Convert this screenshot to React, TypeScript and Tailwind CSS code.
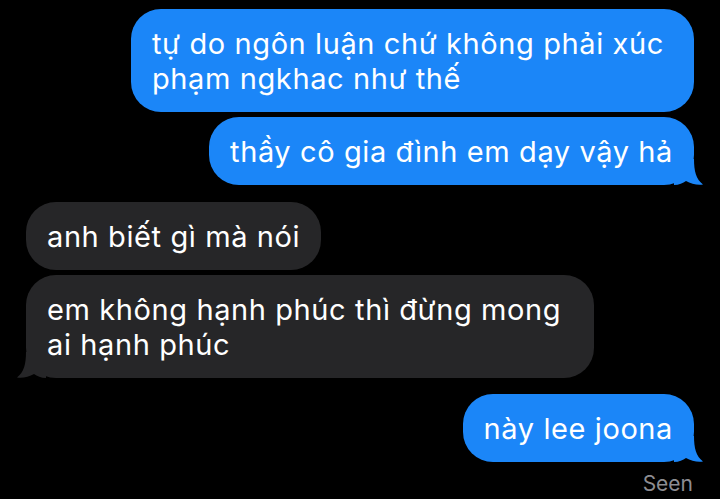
import React from "react";

const BLUE = "#1b86f8";
const GRAY = "#262628";

function Tail({ side, color }: { side: "left" | "right"; color: string }) {
  return (
    <svg
      width="30"
      height="26"
      viewBox="0 0 30 26"
      className={
        side === "right"
          ? "absolute right-[-10px] bottom-0"
          : "absolute left-[-10px] bottom-0 -scale-x-100"
      }
    >
      <path
        d="M20 0 C20 12 22 20 29 25.5 C24 26.5 17 25 12 22 C9 24 5 26 0 26 L0 0 Z"
        fill={color}
      />
    </svg>
  );
}

function Bubble({
  text,
  side,
  tail,
  narrow,
}: {
  text: React.ReactNode;
  side: "left" | "right";
  tail?: boolean;
  narrow?: boolean;
}) {
  const color = side === "right" ? BLUE : GRAY;
  return (
    <div className={side === "right" ? "flex justify-end" : "flex justify-start"}>
      <div
        className={
          "relative rounded-[30px] px-[21px] pt-[17px] pb-[16px] text-[29px] leading-[35px] tracking-[0.6px] text-white " +
          (narrow ? "max-w-[563px]" : "max-w-[568px]")
        }
        style={{ backgroundColor: color }}
      >
        {tail && <Tail side={side} color={color} />}
        <span className="relative">{text}</span>
      </div>
    </div>
  );
}

export default function App() {
  return (
    <div
      className="w-[720px] h-[499px] bg-black overflow-hidden px-[26px] pt-[9px]"
      style={{ fontFamily: "Inter, 'Noto Sans', sans-serif" }}
    >
      <div className="flex flex-col">
        <Bubble side="right" narrow text="tự do ngôn luận chứ không phải xúc phạm ngkhac như thế" />
        <div className="h-[5px]" />
        <Bubble side="right" tail text="thầy cô gia đình em dạy vậy hả" />
        <div className="h-[17px]" />
        <Bubble side="left" text="anh biết gì mà nói" />
        <div className="h-[5px]" />
        <Bubble side="left" tail text="em không hạnh phúc thì đừng mong ai hạnh phúc" />
        <div className="h-[16px]" />
        <Bubble side="right" tail text="này lee joona" />
        <div className="mt-[10px] pr-px text-right text-[21px] leading-[24px] text-[#8d8d92]">
          Seen
        </div>
      </div>
    </div>
  );
}
